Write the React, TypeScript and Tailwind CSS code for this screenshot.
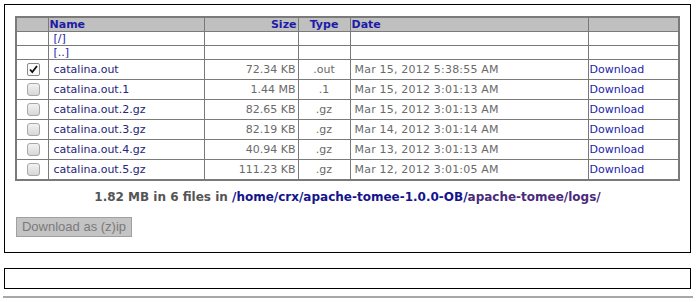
import React from "react";

const rows = [
  { name: "catalina.out", size: "72.34 KB", type: ".out", date: "Mar 15, 2012 5:38:55 AM", checked: true },
  { name: "catalina.out.1", size: "1.44 MB", type: ".1", date: "Mar 15, 2012 3:01:13 AM", checked: false },
  { name: "catalina.out.2.gz", size: "82.65 KB", type: ".gz", date: "Mar 15, 2012 3:01:13 AM", checked: false },
  { name: "catalina.out.3.gz", size: "82.19 KB", type: ".gz", date: "Mar 14, 2012 3:01:14 AM", checked: false },
  { name: "catalina.out.4.gz", size: "40.94 KB", type: ".gz", date: "Mar 13, 2012 3:01:13 AM", checked: false },
  { name: "catalina.out.5.gz", size: "111.23 KB", type: ".gz", date: "Mar 12, 2012 3:01:05 AM", checked: false },
];

function Check({ checked }: { checked: boolean }) {
  if (checked) {
    return (
      <svg width="13" height="13" viewBox="0 0 13 13" className="block">
        <rect x="0.5" y="0.5" width="12" height="12" rx="1.5" fill="#fafafa" stroke="#8a8a8a" />
        <path d="M3 6.5 L5.3 9 L10 3" fill="none" stroke="#111" strokeWidth="1.8" />
      </svg>
    );
  }
  return (
    <svg width="13" height="13" viewBox="0 0 13 13" className="block">
      <defs>
        <linearGradient id="cg" x1="0" y1="0" x2="0" y2="1">
          <stop offset="0" stopColor="#f4f4f4" />
          <stop offset="1" stopColor="#d6d6d6" />
        </linearGradient>
      </defs>
      <rect x="0.5" y="0.5" width="12" height="12" rx="2.5" fill="url(#cg)" stroke="#a8a8a8" />
    </svg>
  );
}

export default function App() {
  const cell = "border border-[#7a7a7a]";
  return (
    <div className="bg-white w-[696px] h-[302px] pt-[4px] pl-[4px] font-['DejaVu_Sans',Verdana,sans-serif]">
      <div className="border border-black w-[687px] h-[249px] pt-[11px] pl-[10px]">
        <table className="w-[665px] border-collapse border-2 border-[#7a7a7a] text-[11px] leading-[13px]">
          <thead>
            <tr className="bg-[#c0c0c0] h-[14px] text-[#1c1ca8] font-bold">
              <th className={`${cell} w-[32px]`}></th>
              <th className={`${cell} w-[156px] text-left pl-[1px]`}>Name</th>
              <th className={`${cell} w-[94px] text-right pr-[1px]`}>Size</th>
              <th className={`${cell} w-[52px] text-center`}>Type</th>
              <th className={`${cell} w-[238px] text-left pl-[1px]`}>Date</th>
              <th className={`${cell}`}></th>
            </tr>
          </thead>
          <tbody>
            <tr className="h-[14px]">
              <td className={cell}></td>
              <td className={`${cell} pl-[5px] text-[#1c1ca8]`}>[/]</td>
              <td className={cell}></td>
              <td className={cell}></td>
              <td className={cell}></td>
              <td className={cell}></td>
            </tr>
            <tr className="h-[14px]">
              <td className={cell}></td>
              <td className={`${cell} pl-[5px] text-[#1c1ca8]`}>[..]</td>
              <td className={cell}></td>
              <td className={cell}></td>
              <td className={cell}></td>
              <td className={cell}></td>
            </tr>
            {rows.map((r) => (
              <tr key={r.name} className="h-[20px]">
                <td className={cell}>
                  <div className="flex justify-center pl-[2px]">
                    <Check checked={r.checked} />
                  </div>
                </td>
                <td className={`${cell} pl-[5px] text-[#24247a]`}>{r.name}</td>
                <td className={`${cell} pr-[2px] text-right text-[#6a6a6a]`}>{r.size}</td>
                <td className={`${cell} text-center text-[#6a6a6a]`}>{r.type}</td>
                <td className={`${cell} pl-[4px] tracking-[0.2px] text-[#6a6a6a]`}>{r.date}</td>
                <td className={`${cell} pl-[1px] text-[#1c1ca8]`}>Download</td>
              </tr>
            ))}
          </tbody>
        </table>
        <div className="w-[665px] mt-[9px] text-center text-[12px] leading-[14px] font-bold">
          <span className="text-[#555]">1.82 MB in 6 files in </span>
          <span className="text-[#14148c]">/home/crx/apache-tomee-1.0.0-OB/</span>
          <span className="text-[#4a2a7a]">apache-tomee/logs/</span>
        </div>
        <button className="mt-[13px] ml-[1px] w-[116px] h-[20px] bg-[#c4c4c4] border border-[#a0a0a0] text-[#7a7a7a] text-[13px] leading-[18px] font-['Liberation_Sans',Arial,sans-serif]">
          Download as (z)ip
        </button>
      </div>
      <div className="mt-[15px] border border-black w-[687px] h-[21px]"></div>
      <div className="mt-[7px] -ml-[1px] w-[690px] h-[2px] bg-[#a8a8a8]"></div>
    </div>
  );
}
